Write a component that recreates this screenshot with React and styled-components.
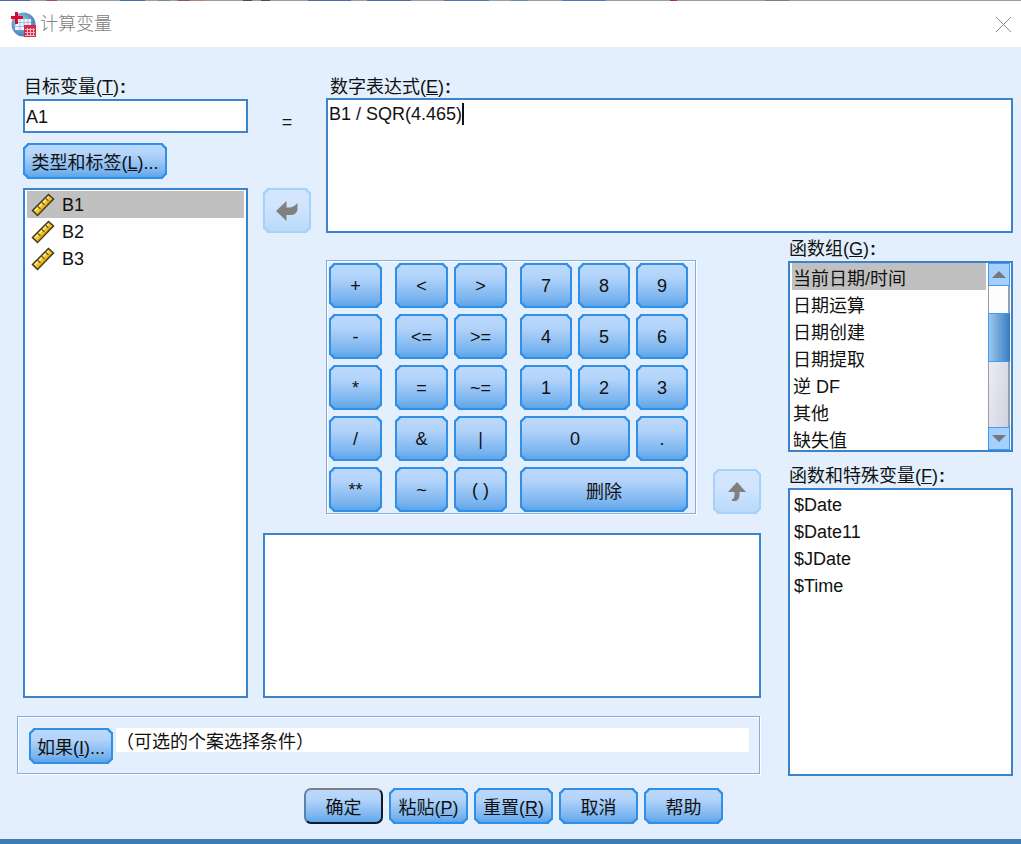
import React, { useLayoutEffect, useRef, useState } from "react";
import styled, { createGlobalStyle, css } from "styled-components";

const fontStack = '"Liberation Sans", "Noto Sans CJK SC", sans-serif';

const GlobalStyle = createGlobalStyle`
  *, *::before, *::after { box-sizing: border-box; }
  body {
    margin: 0;
    background: #e3effc;
    color: #111;
    font: 18px/27px ${fontStack};
  }
  button, input, textarea { font: inherit; color: inherit; }
  ul { list-style: none; margin: 0; padding: 0; }
`;

const Window = styled.div`
  display: flex;
  flex-direction: column;
  min-height: 100vh;
`;

const Desktop = styled.div`
  height: 1px;
  background: linear-gradient(
    90deg,
    #4a68a8 0 30px, #9b9ca9 30px 46px, #a8504e 46px 57px, #9b9ca9 57px 120px,
    #3f73a6 120px 145px, #9b9ca9 145px 158px, #6f8f98 158px 170px, #9b9ca9 170px 178px,
    #85566a 178px 190px, #b98274 190px 205px, #9b9ca9 205px 243px, #4c4a50 243px 252px,
    #9b9ca9 252px 261px, #4c4a50 261px 270px, #9b9ca9 270px 308px, #5568a8 308px 351px,
    #9b9ca9 351px 367px, #5568a8 367px 411px, #9b9ca9 411px 444px, #4a7cb0 444px 489px,
    #9b9ca9 489px 511px, #5f8fa8 511px 528px, #9b9ca9 528px 562px, #5a72b8 562px 606px,
    #9b9ca9 606px 670px, #c0244c 670px 677px, #9b9ca9 677px 765px, #807c80 765px 789px,
    #9b9ca9 789px
  );
`;

const TitleBar = styled.header`
  display: flex;
  align-items: center;
  gap: 4px;
  height: 46px;
  padding: 0 9px 0 11px;
  background: #fff;
`;

const Title = styled.h1`
  flex: 1;
  margin: 0;
  color: #808080;
  font-size: 18px;
  font-weight: 300;
`;

const CloseButton = styled.button`
  display: flex;
  padding: 0;
  border: 0;
  background: none;
`;

const Workspace = styled.main`
  display: grid;
  grid-template-columns: minmax(160px, 225fr) 48px minmax(435px, 435fr) minmax(180px, 237fr);
  grid-template-rows: auto 1fr auto;
  grid-template-areas:
    "source operator expression expression"
    "source builder builder functions"
    "condition condition condition functions";
  column-gap: 15px;
  flex: 1;
  padding: 28px 8px 12px 23px;
`;

const column = css`
  display: flex;
  flex-direction: column;
`;

const SourcePane = styled.section`
  grid-area: source;
  ${column}
`;

const OperatorPane = styled.div`
  grid-area: operator;
  ${column}
  justify-content: space-between;
  align-items: center;
  padding-top: 34px;
`;

const ExpressionPane = styled.section`
  grid-area: expression;
  ${column}
`;

const BuilderPane = styled.section`
  grid-area: builder;
  ${column}
  gap: 19px;
  padding-top: 27px;
`;

const BuilderTop = styled.div`
  display: flex;
  justify-content: space-between;
  align-items: flex-end;
  padding-left: 63px;
`;

const FunctionsPane = styled.section`
  grid-area: functions;
  ${column}
  padding: 4px 0 0 12px;
`;

const Label = styled.label`
  display: block;
  height: 24px;
  padding-left: 1px;
  line-height: 24px;
  white-space: nowrap;
`;

const ExpressionLabel = styled(Label)`
  height: 23px;
  padding-left: 4px;
`;

const Colon = styled.b`
  margin-left: 1px;
`;

const field = css`
  border: 2px solid #3c83cb;
  background: #fff;
`;

const TargetInput = styled.input`
  ${field}
  width: 100%;
  height: 34px;
  margin-bottom: 10px;
  padding: 2px 1px 0;
  outline: 0;
`;

const ExpressionBox = styled.div`
  position: relative;
  display: flex;
`;

const ExpressionInput = styled.textarea`
  ${field}
  width: 100%;
  height: 135px;
  padding: 1px;
  outline: 0;
  resize: none;
  caret-color: transparent;
`;

const Caret = styled.span`
  position: absolute;
  top: 5px;
  width: 2px;
  height: 22px;
  background: #111;
`;

const Description = styled.div`
  ${field}
  flex: 1;
  min-height: 165px;
`;

const Button = styled.button`
  display: flex;
  align-items: center;
  justify-content: center;
  width: ${(p) => p.$width || "100%"};
  height: ${(p) => p.$height || "36px"};
  padding: ${(p) => (p.$low ? "5px 0 0" : "0")};
  border: 2px solid #3090e8;
  border-radius: 5px;
  corner-shape: bevel;
  background: linear-gradient(#bcd9fc, #b2d3fa 30%, #8fc0f3 62%, #7ab4ef 82%, #5ca5ea);
  white-space: nowrap;
  &:disabled {
    border-color: #a6d1fa;
    background: linear-gradient(#d5e7fe, #d0e4fd 40%, #b9dafa);
  }
`;

const DefaultButton = styled(Button)`
  border-color: #7d7f84 #0c1c2c #0c1c2c #5b83ab;
  border-radius: 7px;
  corner-shape: round;
`;

const ListBox = styled.ul`
  ${field}
  flex: 1;
  padding: ${(p) => p.$padding || "1px 2px"};
`;

const VariableList = styled(ListBox)`
  margin-top: 9px;
`;

const Option = styled.li`
  display: flex;
  align-items: center;
  gap: 7px;
  height: 27px;
  padding: ${(p) => p.$drop || "0"} 0 0 ${(p) => p.$indent || "2px"};
  background: ${(p) => (p["aria-selected"] ? "#c0c0c0" : "none")};
  white-space: nowrap;
`;

const GroupFrame = styled.div`
  ${field}
  display: flex;
  height: 191px;
  margin-bottom: 12px;
  padding: 0 1px 0 2px;
  overflow: hidden;
`;

const GroupList = styled.ul`
  flex: 1;
`;

const ScrollBar = styled.div`
  ${column}
  width: 22px;
  height: 187px;
  margin-left: 2px;
`;

const ScrollButton = styled.button`
  display: flex;
  align-items: center;
  justify-content: center;
  height: 23px;
  padding: 0;
  border: 1px solid #3f9bf5;
  background: #a5cffc;
`;

const Track = styled.div`
  flex: ${(p) => p.$part};
  border: solid #9a9ca8;
  border-width: 0 2px 0 1px;
  background: ${(p) => (p.$shaded ? "linear-gradient(100deg, #ececf4, #d2d2de)" : "#fdfdfd")};
`;

const Thumb = styled.div`
  height: 49px;
  border: 1px solid #3f9bf5;
  border-right-color: #2f74b8;
  background: linear-gradient(90deg, #9cc8ec, #3c80c4);
`;

const Keypad = styled.div`
  display: flex;
  gap: 13px;
  padding: 2px 7px 1px 2px;
  border: 1px solid #83aedb;
  box-shadow: inset 1px 1px #fff, 1px 1px #fff;
`;

const KeyGroup = styled.div`
  display: grid;
  grid-template-columns: repeat(${(p) => p.$columns}, ${(p) => p.$size});
  grid-auto-rows: 45px;
  gap: 6px;
`;

const Key = styled(Button)`
  grid-column: span ${(p) => p.$span || 1};
  height: 45px;
  padding-top: ${(p) => (p.$low ? "5px" : "2px")};
`;

const Condition = styled.section`
  grid-area: condition;
  display: flex;
  align-items: flex-start;
  gap: 3px;
  height: 58px;
  margin: 18px 1px 2px -6px;
  padding: 11px 10px 0 11px;
  border: 1px solid #83aedb;
  box-shadow: inset 1px 1px #fff, 1px 1px #fff;
`;

const ConditionText = styled.output`
  flex: 1;
  height: 24px;
  background: #fff;
  line-height: 28px;
`;

const Footer = styled.footer`
  display: flex;
  justify-content: center;
  gap: 6px;
  padding: 0 8px 15px 14px;
`;

const Taskbar = styled.div`
  height: 5px;
  background: #417cb0;
`;

const AppIcon = () => (
  <svg width="25" height="25" viewBox="0 0 25 25" aria-hidden="true">
    <defs>
      <radialGradient id="globe" cx="0.4" cy="0.4" r="0.65">
        <stop offset="0" stopColor="#a9cdea" />
        <stop offset="1" stopColor="#3c78b4" />
      </radialGradient>
    </defs>
    <circle cx="12.5" cy="12.5" r="12" fill="url(#globe)" />
    <path d="M5 7h15v7h-7v4H4z" fill="#eef5fc" />
    <path d="M5 10.5h15M5 14.5h8M9 7v11M13 7v7M17 7v7" stroke="#9cc0e2" fill="none" />
    <path d="M4 0h3v4h5v3H7v5H4V7H0V4h4z" fill="#d80b35" />
    <rect x="13" y="13" width="12" height="12" fill="#d42a4c" />
    <path d="M14 17.5h10M14 20.5h10M14 23.5h10M16.5 16v8M19.5 16v8M22.5 16v8" stroke="#f6b9c6" fill="none" />
  </svg>
);

const Ruler = () => (
  <svg width="24" height="24" viewBox="0 0 24 24" aria-hidden="true">
    <path d="M1.5 17.5 17.5 1.5 22.5 6 6.5 22.5Z" fill="#f5c326" stroke="#3f3a20" strokeWidth="1.5" />
    <path d="M4 17.5 17.5 4" stroke="#fff0a0" strokeWidth="1.5" />
    <path d="m6.5 13 3 3m1-7 3 3m1-7 3 3" stroke="#6a5a1c" strokeWidth="1.2" />
    <path d="m7 20.5 13.5-14" stroke="#c08a08" />
  </svg>
);

const LeftArrow = () => (
  <svg width="22" height="20" viewBox="0 0 22 20" fill="#808080" aria-hidden="true">
    <path d="M0 10 10.5 0V6.5H14Q18 6 21.5 2V9Q20 14 15 14H10.5V20Z" />
  </svg>
);

const UpArrow = () => (
  <svg width="18" height="20" viewBox="0 0 18 20" fill="#808080" aria-hidden="true">
    <path d="M9 0 18 10H11.5V13Q11.5 17 8 19H4V17.5Q6.5 16.5 6.5 14V10H0Z" />
  </svg>
);

const Triangle = ({ down }) => (
  <svg width="14" height="7" viewBox="0 0 14 7" aria-hidden="true">
    <path d={down ? "M0 0H14L7 7Z" : "M0 7H14L7 0Z"} fill="#77777c" />
  </svg>
);

const variables = ["B1", "B2", "B3"];
const groups = ["当前日期/时间", "日期运算", "日期创建", "日期提取", "逆 DF", "其他", "缺失值"];
const functions = ["$Date", "$Date11", "$JDate", "$Time"];
const arithmetic = ["+", "-", "*", "/", "**"];
const logic = ["<", ">", "<=", ">=", "=", "~=", "&", "|", "~", "( )"];
const digits = ["7", "8", "9", "4", "5", "6", "1", "2", "3"];

export default function App() {
  const [target, setTarget] = useState("A1");
  const [expression, setExpression] = useState("B1 / SQR(4.465)");
  const [caretX, setCaretX] = useState(0);
  const expressionRef = useRef(null);

  useLayoutEffect(() => {
    const context = document.createElement("canvas").getContext("2d");
    context.font = getComputedStyle(expressionRef.current).font;
    setCaretX(Math.round(context.measureText(expression).width) + 3);
  }, [expression]);

  return (
    <Window>
      <GlobalStyle />
      <Desktop />
      <TitleBar>
        <AppIcon />
        <Title>计算变量</Title>
        <CloseButton aria-label="关闭">
          <svg width="17" height="17" viewBox="0 0 17 17" stroke="#8a8a8a" aria-hidden="true">
            <path d="m1 1 15 15M16 1 1 16" />
          </svg>
        </CloseButton>
      </TitleBar>

      <Workspace>
        <SourcePane>
          <Label htmlFor="target">目标变量(<u>T</u>)<Colon>:</Colon></Label>
          <TargetInput id="target" value={target} onChange={(e) => setTarget(e.target.value)} />
          <Button $width="144px" $low>类型和标签(<u>L</u>)...</Button>
          <VariableList role="listbox" aria-label="变量">
            {variables.map((v, i) => (
              <Option key={v} role="option" aria-selected={i === 0} $indent="4px" $drop="1px">
                <Ruler />
                {v}
              </Option>
            ))}
          </VariableList>
        </SourcePane>

        <OperatorPane>
          <span>=</span>
          <Button $height="45px" disabled aria-label="移入表达式"><LeftArrow /></Button>
        </OperatorPane>

        <ExpressionPane>
          <ExpressionLabel htmlFor="expression">数字表达式(<u>E</u>)<Colon>:</Colon></ExpressionLabel>
          <ExpressionBox>
            <ExpressionInput
              id="expression"
              ref={expressionRef}
              spellCheck={false}
              value={expression}
              onChange={(e) => setExpression(e.target.value)}
            />
            <Caret style={{ left: caretX }} />
          </ExpressionBox>
        </ExpressionPane>

        <BuilderPane>
          <BuilderTop>
            <Keypad>
              <KeyGroup $columns={1} $size="53px">
                {arithmetic.map((k) => <Key key={k}>{k}</Key>)}
              </KeyGroup>
              <KeyGroup $columns={2} $size="53px">
                {logic.map((k) => <Key key={k}>{k}</Key>)}
              </KeyGroup>
              <KeyGroup $columns={3} $size="52px">
                {digits.map((k) => <Key key={k}>{k}</Key>)}
                <Key $span={2}>0</Key>
                <Key>.</Key>
                <Key $span={3} $low>删除</Key>
              </KeyGroup>
            </Keypad>
            <Button $width="48px" $height="45px" disabled aria-label="移入函数"><UpArrow /></Button>
          </BuilderTop>
          <Description />
        </BuilderPane>

        <FunctionsPane>
          <Label as="div" id="groups">函数组(<u>G</u>)<Colon>:</Colon></Label>
          <GroupFrame>
            <GroupList role="listbox" aria-labelledby="groups">
              {groups.map((g, i) => (
                <Option key={g} role="option" aria-selected={i === 0} $indent="1px" $drop="5px">{g}</Option>
              ))}
            </GroupList>
            <ScrollBar>
              <ScrollButton aria-label="向上滚动"><Triangle /></ScrollButton>
              <Track $part={27} />
              <Thumb />
              <Track $part={65} $shaded />
              <ScrollButton aria-label="向下滚动"><Triangle down /></ScrollButton>
            </ScrollBar>
          </GroupFrame>
          <Label as="div" id="functions">函数和特殊变量(<u>F</u>)<Colon>:</Colon></Label>
          <ListBox $padding="2px" role="listbox" aria-labelledby="functions">
            {functions.map((f) => (
              <Option key={f} role="option" aria-selected={false}>{f}</Option>
            ))}
          </ListBox>
        </FunctionsPane>

        <Condition>
          <Button $width="84px" $low>如果(<u>I</u>)...</Button>
          <ConditionText>（可选的个案选择条件）</ConditionText>
        </Condition>
      </Workspace>

      <Footer>
        <DefaultButton $width="79px" $low>确定</DefaultButton>
        <Button $width="79px" $low>粘贴(<u>P</u>)</Button>
        <Button $width="79px" $low>重置(<u>R</u>)</Button>
        <Button $width="79px" $low>取消</Button>
        <Button $width="79px" $low>帮助</Button>
      </Footer>
      <Taskbar />
    </Window>
  );
}
